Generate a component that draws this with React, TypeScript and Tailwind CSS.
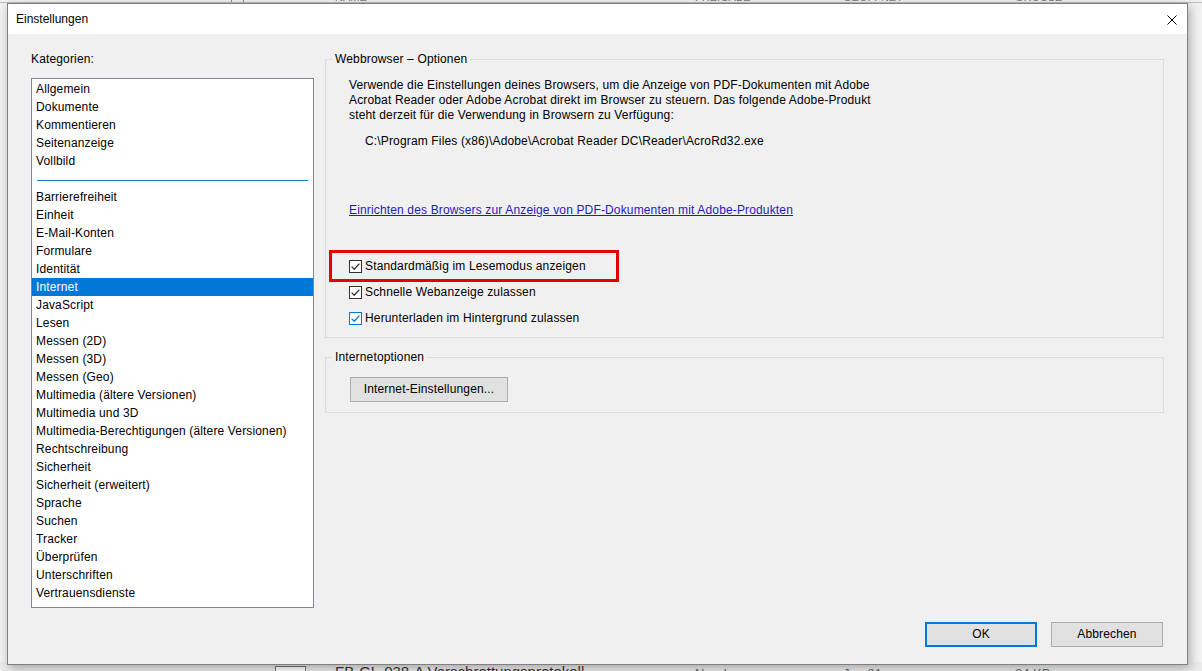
import React from "react"

const categoriesTop = ["Allgemein", "Dokumente", "Kommentieren", "Seitenanzeige", "Vollbild"]

const categoriesBottom = [
  "Barrierefreiheit",
  "Einheit",
  "E-Mail-Konten",
  "Formulare",
  "Identität",
  "Internet",
  "JavaScript",
  "Lesen",
  "Messen (2D)",
  "Messen (3D)",
  "Messen (Geo)",
  "Multimedia (ältere Versionen)",
  "Multimedia und 3D",
  "Multimedia-Berechtigungen (ältere Versionen)",
  "Rechtschreibung",
  "Sicherheit",
  "Sicherheit (erweitert)",
  "Sprache",
  "Suchen",
  "Tracker",
  "Überprüfen",
  "Unterschriften",
  "Vertrauensdienste",
]

export default function App() {
  return (
    <div className="relative flex h-[671px] w-[1202px] flex-col justify-between overflow-hidden bg-[#f2f2f2] font-['Liberation_Sans',Arial,sans-serif] text-black">
      <ExplorerHeader />
      <ExplorerRow />
      <SettingsDialog />
    </div>
  )
}

function ExplorerHeader() {
  return (
    <div className="flex h-[3px] overflow-hidden border-b border-[#bdbdbd] text-[11px] leading-[12px] text-[#777]">
      <div className="ml-[231px] h-full w-[13px] border-x border-[#888]" />
      <div className="-mt-[9px] flex">
        <span className="ml-[91px] w-[360px]">NAME</span>
        <span className="w-[148px]">FREIGABE</span>
        <span className="w-[172px]">GEÖFFNET</span>
        <span>GRÖSSE</span>
      </div>
    </div>
  )
}

function ExplorerRow() {
  return (
    <div className="flex h-[9px] items-start overflow-hidden bg-[#ebebeb] pt-[1px]">
      <div className="ml-[275px] mt-[3px] h-[8px] w-[31px] border border-[#777] bg-white" />
      <span className="ml-[29px] w-[360px] text-[15px] leading-[18px] text-[#333]">
        FB-GL-038-A Verschrottungsprotokoll
      </span>
      <span className="mt-[3px] w-[148px] text-[13px] leading-[16px] text-[#666]">Nur du</span>
      <span className="mt-[3px] w-[172px] text-[13px] leading-[16px] text-[#666]">Jun 21</span>
      <span className="mt-[3px] text-[13px] leading-[16px] text-[#666]">24 KB</span>
    </div>
  )
}

function SettingsDialog() {
  return (
    <div className="absolute left-[7px] top-[3px] flex h-[662px] w-[1181px] flex-col border border-[#7f7f7f] bg-[#f0f0f0] text-[12px] tracking-[0.15px] shadow-[2px_3px_10px_rgba(0,0,0,0.3)]">
      <div className="flex h-[30px] shrink-0 items-center justify-between bg-white pl-[8px] pr-[10px] pt-[1px]">
        <span className="leading-[15px] tracking-normal">Einstellungen</span>
        <svg width="10" height="10" viewBox="0 0 10 10">
          <path d="M0.5 0.5 L9.5 9.5 M9.5 0.5 L0.5 9.5" stroke="#000" strokeWidth="1" />
        </svg>
      </div>

      <div className="flex flex-1 flex-col px-[23px] pt-[18px]">
        <div className="flex gap-[11px]">
          <CategoryList />
          <div className="flex w-[839px] flex-col">
            <WebbrowserGroup />
            <InternetOptionsGroup />
          </div>
        </div>

        <div className="mt-auto flex justify-end gap-[14px] pb-[17px] pr-[1px]">
          <button className="h-[25px] w-[112px] border-2 border-[#0078d7] bg-[#e1e1e1] leading-[15px]">
            OK
          </button>
          <button className="h-[25px] w-[112px] border border-[#adadad] bg-[#e1e1e1] leading-[15px]">
            Abbrechen
          </button>
        </div>
      </div>
    </div>
  )
}

function CategoryList() {
  return (
    <div className="flex w-[283px] flex-col">
      <span className="h-[15px] leading-[15px]">Kategorien:</span>
      <div className="mt-[11px] h-[530px] border border-[#828790] bg-white pt-[1px]">
        {categoriesTop.map((name) => (
          <ListItem key={name} name={name} />
        ))}
        <div className="h-[18px] px-[5px] pt-[10px]">
          <div className="h-px bg-[#1b80bf]" />
        </div>
        {categoriesBottom.map((name) => (
          <ListItem key={name} name={name} selected={name === "Internet"} />
        ))}
      </div>
    </div>
  )
}

function ListItem({ name, selected = false }: { name: string; selected?: boolean }) {
  return (
    <div
      className={
        selected
          ? "h-[18px] bg-[#0078d7] pl-[4px] leading-[18px] text-white"
          : "h-[18px] pl-[4px] leading-[18px]"
      }
    >
      {name}
    </div>
  )
}

function WebbrowserGroup() {
  return (
    <fieldset className="border border-[#dcdcdc]">
      <legend className="ml-[6px] px-[3px] leading-[15px]">Webbrowser – Optionen</legend>
      <div className="pb-[6px] pl-[23px] pt-[11px]">
        <p className="leading-[15px]">
          Verwende die Einstellungen deines Browsers, um die Anzeige von PDF-Dokumenten mit Adobe
          <br />
          Acrobat Reader oder Adobe Acrobat direkt im Browser zu steuern. Das folgende Adobe-Produkt
          <br />
          steht derzeit für die Verwendung in Browsern zu Verfügung:
        </p>
        <p className="ml-[16px] mt-[11px] leading-[15px]">
          C:\Program Files (x86)\Adobe\Acrobat Reader DC\Reader\AcroRd32.exe
        </p>
        <a className="mt-[54px] block leading-[15px] text-[#1c1cc0] underline" href="#">
          Einrichten des Browsers zur Anzeige von PDF-Dokumenten mit Adobe-Produkten
        </a>
        <div className="mt-[35px] flex flex-col">
          <CheckRow label="Standardmäßig im Lesemodus anzeigen" marked />
          <CheckRow label="Schnelle Webanzeige zulassen" />
          <CheckRow label="Herunterladen im Hintergrund zulassen" focused />
        </div>
      </div>
    </fieldset>
  )
}

function CheckRow({
  label,
  marked = false,
  focused = false,
}: {
  label: string
  marked?: boolean
  focused?: boolean
}) {
  const color = focused ? "#0078d7" : "#333333"
  return (
    <div className="relative flex h-[26px] items-center">
      <svg width="13" height="13" viewBox="0 0 13 13" className="shrink-0">
        <rect x="0.5" y="0.5" width="12" height="12" fill="#fff" stroke={color} />
        <path d="M2.6 6.6 L5.2 9.2 L10.4 3.6" fill="none" stroke={color} strokeWidth="1.3" />
      </svg>
      <span className="ml-[3px] leading-[15px]">{label}</span>
      {marked && (
        <div className="absolute -left-[20px] top-[-3px] h-[32px] w-[290px] border-[3px] border-[#e50000]" />
      )}
    </div>
  )
}

function InternetOptionsGroup() {
  return (
    <fieldset className="mt-[12px] border border-[#dcdcdc]">
      <legend className="ml-[6px] px-[3px] leading-[15px]">Internetoptionen</legend>
      <div className="pb-[10px] pl-[24px] pt-[12px]">
        <button className="h-[25px] w-[158px] border border-[#adadad] bg-[#e1e1e1] leading-[15px]">
          Internet-Einstellungen...
        </button>
      </div>
    </fieldset>
  )
}
